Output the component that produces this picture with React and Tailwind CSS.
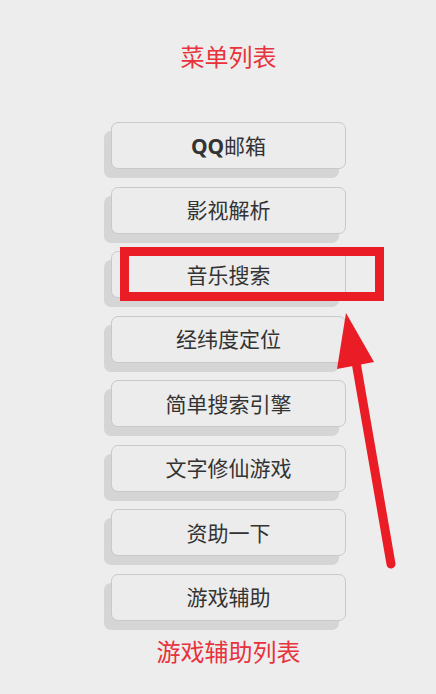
import React from "react";

const items = [
  { label: "QQ邮箱", bold: true },
  { label: "影视解析" },
  { label: "音乐搜索" },
  { label: "经纬度定位" },
  { label: "简单搜索引擎" },
  { label: "文字修仙游戏" },
  { label: "资助一下" },
  { label: "游戏辅助" },
];

export default function App() {
  const font = { fontFamily: '"Noto Sans", "Noto Sans CJK SC", sans-serif' };
  return (
    <div className="relative w-[436px] h-[694px] bg-[#ededed] overflow-hidden" style={font}>
      <div className="ml-[111px] w-[235px] flex flex-col items-stretch">
        <div className="pt-[41px] h-[73px] text-center text-[24px] leading-[32px] text-[#e8323c]">
          菜单列表
        </div>
        <div className="mt-[49px] flex flex-col gap-[17.5px]">
          {items.map((it) => (
            <button
              key={it.label}
              className="h-[47px] w-full rounded-[7px] border border-[#c9c9c9] bg-[#ececec] shadow-[-7px_9px_0_#d5d5d5] text-[21px] leading-[28px] text-[#333333] flex items-center justify-center"
            >
              {it.bold ? (
                <span>
                  <span className="font-bold">QQ</span>邮箱
                </span>
              ) : (
                it.label
              )}
            </button>
          ))}
        </div>
        <div className="mt-[15px] text-center text-[24px] leading-[32px] text-[#e8323c]">
          游戏辅助列表
        </div>
      </div>

      <div className="absolute left-[120px] top-[247px] w-[264px] h-[54px] border-[9px] border-[#ea1c26]" />
      <svg className="absolute left-0 top-0" width="436" height="694" viewBox="0 0 436 694">
        <polygon points="346,313 337,369 374,362" fill="#ea1c26" />
        <line x1="356" y1="362" x2="391" y2="564" stroke="#ea1c26" strokeWidth="9" strokeLinecap="round" />
      </svg>
    </div>
  );
}
